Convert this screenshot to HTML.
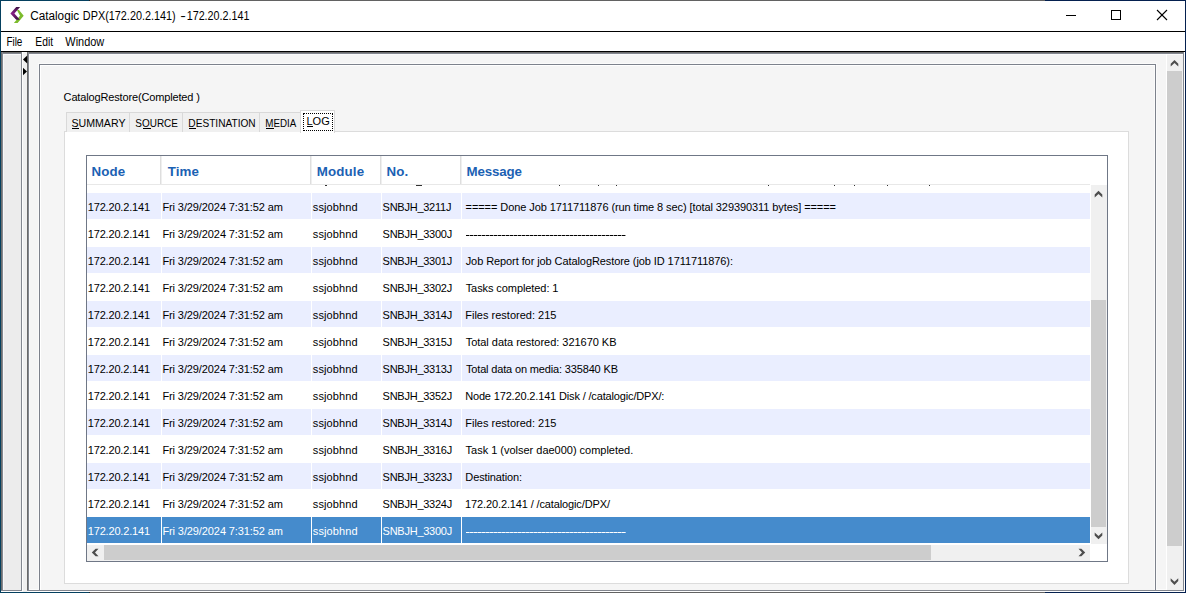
<!DOCTYPE html><html><head><meta charset="utf-8"><title>Catalogic DPX</title><style>
*{margin:0;padding:0;box-sizing:border-box}
html,body{width:1186px;height:593px;overflow:hidden;background:#fff}
body{position:relative;font-family:"Liberation Sans",sans-serif;color:#000}
.a{position:absolute}
.t{position:absolute;white-space:nowrap;line-height:1}
.title{left:30px;top:10px;font-size:12px}
.menu{font-size:12px;top:36px}
.row{position:absolute;left:87px;width:1003px;height:26px}
.row.lav .c{background:#eaeeff}
.row.sel .c{background:#458bcc;color:#fff}
.c{position:absolute;top:0;height:26px;font-size:11px;line-height:28px;white-space:nowrap;overflow:hidden}
.c span{display:inline-block}
.c1{left:0;width:74px;padding-left:1px}
.c2{left:75px;width:149px;padding-left:1px}
.c3{left:225px;width:69px;padding-left:1px}
.c4{left:295px;width:79px;padding-left:1px}
.c5{left:375px;width:628px;padding-left:4px}
.hd{position:absolute;top:165px;font-size:13.33px;font-weight:bold;color:#1b61b3;line-height:1;white-space:nowrap}
.tab{position:absolute;top:112px;height:20px;background:#f0f0f0;border:1px solid #d9d9d9;border-bottom:none;font-size:11px}
.tab span{position:absolute;top:5px;white-space:nowrap;line-height:1}
.tab i{position:absolute;height:1px;background:#000;top:15px}
</style></head><body>
<div class="a" style="left:0;top:0;width:1186px;height:31px;background:#fff"></div>
<svg class="a" style="left:6px;top:3px" width="24" height="24" viewBox="6 3 24 24">
<defs><linearGradient id="pg" x1="0" y1="0" x2="0" y2="1"><stop offset="0" stop-color="#3a1040"/><stop offset="0.5" stop-color="#8a2088"/><stop offset="1" stop-color="#3a1040"/></linearGradient></defs>
<polygon points="17,10.3 18.8,9.8 23.7,15.8 17.6,22.9 13.9,22.9 20,15.8" fill="#7cbb2c"/>
<polygon points="16.2,7 20.1,7 14.4,13.5 19.9,19.8 16.2,19.8 10.4,13.5" fill="url(#pg)"/>
</svg>
<div id="ti0" class="t title" style="left:30px;transform:translateX(0.18px) scaleX(0.9786);transform-origin:0 0;">Catalogic</div>
<div id="ti1" class="t title" style="left:83px;transform:translateX(-0.13px) scaleX(0.9037);transform-origin:0 0;">DPX(172.20.2.141)</div>
<div id="ti2" class="t title" style="left:180px;transform:translateX(0.30px) scaleX(1.4000);transform-origin:0 0;">-</div>
<div id="ti3" class="t title" style="left:187px;transform:translateX(-0.30px) scaleX(0.8951);transform-origin:0 0;">172.20.2.141</div>
<svg class="a" style="left:1056px;top:4px" width="120" height="24" viewBox="1056 4 120 24" shape-rendering="crispEdges">
<rect x="1066" y="15" width="10" height="1" fill="#000"/>
<rect x="1111.5" y="10.5" width="9" height="9" fill="none" stroke="#000" stroke-width="1"/>
<g shape-rendering="auto" stroke="#000" stroke-width="1.1"><line x1="1157" y1="10" x2="1167" y2="20"/><line x1="1167" y1="10" x2="1157" y2="20"/></g>
</svg>
<div class="a" style="left:0;top:31px;width:1186px;height:1px;background:#000"></div>
<div id="file" class="t menu" style="left:7px;transform:translateX(-0.62px) scaleX(0.8277);transform-origin:0 0;">File</div><div id="edit" class="t menu" style="left:36px;transform:translateX(-0.66px) scaleX(0.8598);transform-origin:0 0;">Edit</div><div id="window" class="t menu" style="left:65px;transform:translateX(0.33px) scaleX(0.9111);transform-origin:0 0;">Window</div>
<div class="a" style="left:0;top:51px;width:1186px;height:1px;background:#000"></div>
<div class="a" style="left:1px;top:52px;width:1183px;height:1px;background:#6e6e6e"></div>
<div class="a" style="left:1px;top:53px;width:1183px;height:1px;background:#838790"></div>
<div class="a" style="left:1px;top:54px;width:1184px;height:536px;background:#f5f5f5"></div>
<div class="a" style="left:1px;top:52px;width:1px;height:539px;background:#6e6e6e"></div>
<div class="a" style="left:2px;top:52px;width:1px;height:539px;background:#838790"></div>
<div class="a" style="left:3px;top:54px;width:18px;height:536px;background:#ececec"></div>
<div class="a" style="left:3px;top:54px;width:1px;height:536px;background:#f8f8f8"></div>
<div class="a" style="left:3px;top:54px;width:18px;height:1px;background:#f8f8f8"></div>
<div class="a" style="left:21px;top:52px;width:1px;height:539px;background:#838790"></div>
<div class="a" style="left:22px;top:52px;width:1px;height:540px;background:#fdfdfd"></div>
<div class="a" style="left:23px;top:52px;width:4px;height:540px;background:#f0f0f0"></div>
<div class="a" style="left:27px;top:52px;width:1px;height:539px;background:#6a6a6a"></div>
<div class="a" style="left:28px;top:52px;width:1px;height:539px;background:#838790"></div>
<div class="a" style="left:29px;top:54px;width:1px;height:536px;background:#fafafa"></div>
<div class="a" style="left:29px;top:54px;width:1154px;height:1px;background:#fafafa"></div>
<svg class="a" style="left:22px;top:54px" width="6" height="24" viewBox="22 54 6 24"><polygon points="23,59.5 27.2,55.6 27.2,63.4" fill="#000"/><polygon points="27,71.5 23,67.8 23,75.2" fill="#000"/></svg>
<div class="a" style="left:38px;top:63px;width:1119px;height:527px;border:1px solid #fbfbfb;border-bottom:none"></div>
<div class="a" style="left:29px;top:589px;width:1137px;height:1px;background:#fcfcfc"></div>
<div class="a" style="left:39px;top:64px;width:1117px;height:530px;border:1px solid #7d828c;background:#f5f5f5"></div>
<div class="a" style="left:40px;top:65px;width:1115px;height:1px;background:#fff"></div>
<div class="a" style="left:40px;top:65px;width:1px;height:525px;background:#fff"></div>
<div class="a" style="left:1154px;top:66px;width:1px;height:524px;background:#fbfbfb"></div>
<div class="a" style="left:1166px;top:54px;width:1px;height:536px;background:#fff"></div>
<div class="a" style="left:1167px;top:55px;width:16px;height:535px;background:#f0f0f0"></div>
<div class="a" style="left:1167px;top:71px;width:15px;height:475px;background:#cdcdcd"></div>
<div class="a" style="left:1183px;top:52px;width:1px;height:538px;background:#838790"></div>
<div class="a" style="left:1184px;top:52px;width:1px;height:539px;background:#fff"></div>
<div class="a" style="left:1px;top:590px;width:21px;height:1px;background:#838790"></div>
<div class="a" style="left:27px;top:590px;width:1157px;height:1px;background:#838790"></div>
<div class="a" style="left:1px;top:591px;width:21px;height:1px;background:#fff"></div>
<div class="a" style="left:27px;top:591px;width:1158px;height:1px;background:#fff"></div>
<div id="label" class="t" style="left:64px;top:92px;font-size:11px;letter-spacing:-0.149px;margin-left:-0.41px;">CatalogRestore(Completed )</div>
<div class="a" style="left:64px;top:131px;width:1065px;height:453px;border:1px solid #dcdcdc;background:#fff"></div>
<div class="tab" style="left:66px;width:64px"><span id="tab0" style="left:6px;transform:translateX(-1.62px) scaleX(0.9654);transform-origin:0 0;">SUMMARY</span><i style="left:5px;width:7px"></i></div>
<div class="tab" style="left:129px;width:54px"><span id="tab1" style="left:7px;transform:translateX(-1.66px) scaleX(0.9051);transform-origin:0 0;">SOURCE</span><i style="left:13px;width:8px"></i></div>
<div class="tab" style="left:182px;width:78px"><span id="tab2" style="left:7px;transform:translateX(-1.66px) scaleX(0.9199);transform-origin:0 0;">DESTINATION</span><i style="left:6px;width:7px"></i></div>
<div class="tab" style="left:259px;width:42px"><span id="tab3" style="left:7px;transform:translateX(-1.67px) scaleX(0.8885);transform-origin:0 0;">MEDIA</span><i style="left:6px;width:8px"></i></div>
<div class="tab" style="left:300px;top:110px;width:35px;height:23px;background:#fff"><span id="tab4" style="left:7px;top:5px;transform:translateX(-1.50px) scaleX(1.0001);transform-origin:0 0;">LOG</span><i style="left:6px;width:6px;top:15px"></i><div class="a" style="left:2px;top:2px;width:30px;height:18px;border:1px dotted #000"></div></div>
<div class="a" style="left:86px;top:155px;width:1022px;height:407px;border:1px solid #6f7786;background:#fff"></div>
<div id="h0" class="hd" style="left:92px;letter-spacing:0.117px;margin-left:-0.45px;">Node</div>
<div id="h1" class="hd" style="left:167px;letter-spacing:0.104px;margin-left:0.65px;">Time</div>
<div id="h2" class="hd" style="left:317px;letter-spacing:0.112px;margin-left:-0.16px;">Module</div>
<div id="h3" class="hd" style="left:387px;letter-spacing:0.040px;margin-left:-0.45px;">No.</div>
<div id="h4" class="hd" style="left:467px;letter-spacing:-0.165px;margin-left:-0.45px;">Message</div>
<div class="a" style="left:87px;top:184px;width:1003px;height:1px;background:#e8e8e8"></div>
<div class="a" style="left:160px;top:156px;width:1px;height:28px;background:#dedede"></div><div class="a" style="left:161px;top:156px;width:1px;height:28px;background:#efefef"></div>
<div class="a" style="left:310px;top:156px;width:1px;height:28px;background:#dedede"></div><div class="a" style="left:311px;top:156px;width:1px;height:28px;background:#efefef"></div>
<div class="a" style="left:380px;top:156px;width:1px;height:28px;background:#dedede"></div><div class="a" style="left:381px;top:156px;width:1px;height:28px;background:#efefef"></div>
<div class="a" style="left:460px;top:156px;width:1px;height:28px;background:#dedede"></div><div class="a" style="left:461px;top:156px;width:1px;height:28px;background:#efefef"></div>
<div class="a" style="left:325px;top:185px;width:2px;height:1px;background:#333"></div>
<div class="a" style="left:416px;top:185px;width:6px;height:1px;background:#333"></div>
<div class="a" style="left:559px;top:185px;width:1px;height:1px;background:#333"></div>
<div class="a" style="left:598px;top:185px;width:1px;height:1px;background:#333"></div>
<div class="a" style="left:616px;top:185px;width:1px;height:1px;background:#333"></div>
<div class="a" style="left:768px;top:185px;width:1px;height:1px;background:#333"></div>
<div class="a" style="left:834px;top:185px;width:1px;height:1px;background:#333"></div>
<div class="a" style="left:854px;top:185px;width:1px;height:1px;background:#333"></div>
<div class="a" style="left:887px;top:185px;width:1px;height:1px;background:#333"></div>
<div class="a" style="left:929px;top:185px;width:1px;height:1px;background:#333"></div>
<div class="row lav" style="top:193px"><div class="c c1"><span style="letter-spacing:-0.183px;margin-left:-0.21px;">172.20.2.141</span></div><div class="c c2"><span style="letter-spacing:-0.101px;margin-left:-0.62px;">Fri 3/29/2024 7:31:52 am</span></div><div class="c c3"><span style="letter-spacing:0.107px;margin-left:-0.15px;">ssjobhnd</span></div><div class="c c4"><span style="letter-spacing:-0.252px;margin-left:-0.43px;">SNBJH_3211J</span></div><div class="c c5"><span style="letter-spacing:-0.081px;margin-left:-0.41px;">===== Done Job 1711711876 (run time 8 sec) [total 329390311 bytes] =====</span></div></div>
<div class="row" style="top:220px"><div class="c c1"><span style="letter-spacing:-0.183px;margin-left:-0.21px;">172.20.2.141</span></div><div class="c c2"><span style="letter-spacing:-0.101px;margin-left:-0.62px;">Fri 3/29/2024 7:31:52 am</span></div><div class="c c3"><span style="letter-spacing:0.107px;margin-left:-0.15px;">ssjobhnd</span></div><div class="c c4"><span style="letter-spacing:-0.252px;margin-left:-0.43px;">SNBJH_3300J</span></div><div class="c c5"><div class="a" style="left:4px;top:15px;width:160px;height:1px;background:repeating-linear-gradient(to right,#000 0,#000 3px,#959595 3px,#959595 4px)"></div></div></div>
<div class="row lav" style="top:247px"><div class="c c1"><span style="letter-spacing:-0.183px;margin-left:-0.21px;">172.20.2.141</span></div><div class="c c2"><span style="letter-spacing:-0.101px;margin-left:-0.62px;">Fri 3/29/2024 7:31:52 am</span></div><div class="c c3"><span style="letter-spacing:0.107px;margin-left:-0.15px;">ssjobhnd</span></div><div class="c c4"><span style="letter-spacing:-0.252px;margin-left:-0.43px;">SNBJH_3301J</span></div><div class="c c5"><span style="letter-spacing:-0.084px;margin-left:-0.30px;">Job Report for job CatalogRestore (job ID 1711711876):</span></div></div>
<div class="row" style="top:274px"><div class="c c1"><span style="letter-spacing:-0.183px;margin-left:-0.21px;">172.20.2.141</span></div><div class="c c2"><span style="letter-spacing:-0.101px;margin-left:-0.62px;">Fri 3/29/2024 7:31:52 am</span></div><div class="c c3"><span style="letter-spacing:0.107px;margin-left:-0.15px;">ssjobhnd</span></div><div class="c c4"><span style="letter-spacing:-0.252px;margin-left:-0.43px;">SNBJH_3302J</span></div><div class="c c5"><span style="letter-spacing:-0.081px;margin-left:-0.34px;">Tasks completed: 1</span></div></div>
<div class="row lav" style="top:301px"><div class="c c1"><span style="letter-spacing:-0.183px;margin-left:-0.21px;">172.20.2.141</span></div><div class="c c2"><span style="letter-spacing:-0.101px;margin-left:-0.62px;">Fri 3/29/2024 7:31:52 am</span></div><div class="c c3"><span style="letter-spacing:0.107px;margin-left:-0.15px;">ssjobhnd</span></div><div class="c c4"><span style="letter-spacing:-0.252px;margin-left:-0.43px;">SNBJH_3314J</span></div><div class="c c5"><span style="letter-spacing:0.005px;margin-left:-0.75px;">Files restored: 215</span></div></div>
<div class="row" style="top:328px"><div class="c c1"><span style="letter-spacing:-0.183px;margin-left:-0.21px;">172.20.2.141</span></div><div class="c c2"><span style="letter-spacing:-0.101px;margin-left:-0.62px;">Fri 3/29/2024 7:31:52 am</span></div><div class="c c3"><span style="letter-spacing:0.107px;margin-left:-0.15px;">ssjobhnd</span></div><div class="c c4"><span style="letter-spacing:-0.252px;margin-left:-0.43px;">SNBJH_3315J</span></div><div class="c c5"><span style="letter-spacing:-0.030px;margin-left:-0.30px;">Total data restored: 321670 KB</span></div></div>
<div class="row lav" style="top:355px"><div class="c c1"><span style="letter-spacing:-0.183px;margin-left:-0.21px;">172.20.2.141</span></div><div class="c c2"><span style="letter-spacing:-0.101px;margin-left:-0.62px;">Fri 3/29/2024 7:31:52 am</span></div><div class="c c3"><span style="letter-spacing:0.107px;margin-left:-0.15px;">ssjobhnd</span></div><div class="c c4"><span style="letter-spacing:-0.252px;margin-left:-0.43px;">SNBJH_3313J</span></div><div class="c c5"><span style="letter-spacing:-0.155px;margin-left:-0.08px;">Total data on media: 335840 KB</span></div></div>
<div class="row" style="top:382px"><div class="c c1"><span style="letter-spacing:-0.183px;margin-left:-0.21px;">172.20.2.141</span></div><div class="c c2"><span style="letter-spacing:-0.101px;margin-left:-0.62px;">Fri 3/29/2024 7:31:52 am</span></div><div class="c c3"><span style="letter-spacing:0.107px;margin-left:-0.15px;">ssjobhnd</span></div><div class="c c4"><span style="letter-spacing:-0.252px;margin-left:-0.43px;">SNBJH_3352J</span></div><div class="c c5"><span style="letter-spacing:-0.155px;margin-left:-0.86px;">Node 172.20.2.141 Disk / /catalogic/DPX/:</span></div></div>
<div class="row lav" style="top:409px"><div class="c c1"><span style="letter-spacing:-0.183px;margin-left:-0.21px;">172.20.2.141</span></div><div class="c c2"><span style="letter-spacing:-0.101px;margin-left:-0.62px;">Fri 3/29/2024 7:31:52 am</span></div><div class="c c3"><span style="letter-spacing:0.107px;margin-left:-0.15px;">ssjobhnd</span></div><div class="c c4"><span style="letter-spacing:-0.252px;margin-left:-0.43px;">SNBJH_3314J</span></div><div class="c c5"><span style="letter-spacing:0.005px;margin-left:-0.75px;">Files restored: 215</span></div></div>
<div class="row" style="top:436px"><div class="c c1"><span style="letter-spacing:-0.183px;margin-left:-0.21px;">172.20.2.141</span></div><div class="c c2"><span style="letter-spacing:-0.101px;margin-left:-0.62px;">Fri 3/29/2024 7:31:52 am</span></div><div class="c c3"><span style="letter-spacing:0.107px;margin-left:-0.15px;">ssjobhnd</span></div><div class="c c4"><span style="letter-spacing:-0.252px;margin-left:-0.43px;">SNBJH_3316J</span></div><div class="c c5"><span style="letter-spacing:-0.014px;margin-left:-0.43px;">Task 1 (volser dae000) completed.</span></div></div>
<div class="row lav" style="top:463px"><div class="c c1"><span style="letter-spacing:-0.183px;margin-left:-0.21px;">172.20.2.141</span></div><div class="c c2"><span style="letter-spacing:-0.101px;margin-left:-0.62px;">Fri 3/29/2024 7:31:52 am</span></div><div class="c c3"><span style="letter-spacing:0.107px;margin-left:-0.15px;">ssjobhnd</span></div><div class="c c4"><span style="letter-spacing:-0.252px;margin-left:-0.43px;">SNBJH_3323J</span></div><div class="c c5"><span style="letter-spacing:-0.111px;margin-left:-0.71px;">Destination:</span></div></div>
<div class="row" style="top:490px"><div class="c c1"><span style="letter-spacing:-0.183px;margin-left:-0.21px;">172.20.2.141</span></div><div class="c c2"><span style="letter-spacing:-0.101px;margin-left:-0.62px;">Fri 3/29/2024 7:31:52 am</span></div><div class="c c3"><span style="letter-spacing:0.107px;margin-left:-0.15px;">ssjobhnd</span></div><div class="c c4"><span style="letter-spacing:-0.252px;margin-left:-0.43px;">SNBJH_3324J</span></div><div class="c c5"><span style="letter-spacing:-0.130px;margin-left:-0.90px;">172.20.2.141 / /catalogic/DPX/</span></div></div>
<div class="row lav sel" style="top:517px"><div class="c c1"><span style="letter-spacing:-0.183px;margin-left:-0.21px;">172.20.2.141</span></div><div class="c c2"><span style="letter-spacing:-0.101px;margin-left:-0.62px;">Fri 3/29/2024 7:31:52 am</span></div><div class="c c3"><span style="letter-spacing:0.107px;margin-left:-0.15px;">ssjobhnd</span></div><div class="c c4"><span style="letter-spacing:-0.252px;margin-left:-0.43px;">SNBJH_3300J</span></div><div class="c c5"><div class="a" style="left:4px;top:15px;width:160px;height:1px;background:repeating-linear-gradient(to right,#fff 0,#fff 3px,#c3d6ee 3px,#c3d6ee 4px)"></div></div></div>
<div class="a" style="left:1091px;top:185px;width:16px;height:359px;background:#f0f0f0"></div>
<div class="a" style="left:1091px;top:300px;width:15px;height:227px;background:#cdcdcd"></div>
<div class="a" style="left:87px;top:545px;width:1003px;height:16px;background:#f0f0f0"></div>
<div class="a" style="left:104px;top:545px;width:827px;height:15px;background:#cdcdcd"></div>
<svg class="a" style="left:1092px;top:188px" width="14" height="14"><polygon points="6.50,2.80 10.30,6.60 10.30,9.50 6.50,6.00 2.70,9.50 2.70,6.60" fill="#4e4e4e"/></svg>
<svg class="a" style="left:1092px;top:530px" width="14" height="14"><polygon points="6.50,9.20 10.30,5.40 10.30,2.50 6.50,6.00 2.70,2.50 2.70,5.40" fill="#4e4e4e"/></svg>
<svg class="a" style="left:89px;top:546px" width="14" height="14"><polygon points="2.80,6.50 6.60,2.70 9.50,2.70 6.00,6.50 9.50,10.30 6.60,10.30" fill="#4e4e4e"/></svg>
<svg class="a" style="left:1076px;top:546px" width="14" height="14"><polygon points="9.20,6.50 5.40,2.70 2.50,2.70 6.00,6.50 2.50,10.30 5.40,10.30" fill="#4e4e4e"/></svg>
<svg class="a" style="left:1168px;top:57px" width="14" height="14"><polygon points="6.50,2.90 10.30,6.70 10.30,9.60 6.50,6.10 2.70,9.60 2.70,6.70" fill="#4e4e4e"/></svg>
<svg class="a" style="left:1168px;top:576px" width="14" height="14"><polygon points="6.45,8.90 10.25,5.10 10.25,2.20 6.45,5.70 2.65,2.20 2.65,5.10" fill="#4e4e4e"/></svg>
<div class="a" style="left:0;top:0;width:1px;height:593px;background:#04405f"></div>
<div class="a" style="left:0;top:0;width:89px;height:1px;background:#04405f"></div><div class="a" style="left:89px;top:0;width:1px;height:1px;background:#222"></div>
<div class="a" style="left:90px;top:0;width:955px;height:1px;background:#626262"></div>
<div class="a" style="left:1045px;top:0;width:141px;height:1px;background:#04204f"></div>
<div class="a" style="left:1185px;top:0;width:1px;height:593px;background:#04204f"></div>
<div class="a" style="left:0;top:592px;width:89px;height:1px;background:#04405f"></div><div class="a" style="left:89px;top:592px;width:1px;height:1px;background:#222"></div>
<div class="a" style="left:90px;top:592px;width:955px;height:1px;background:#626262"></div>
<div class="a" style="left:1045px;top:592px;width:141px;height:1px;background:#04204f"></div>
</body></html>
